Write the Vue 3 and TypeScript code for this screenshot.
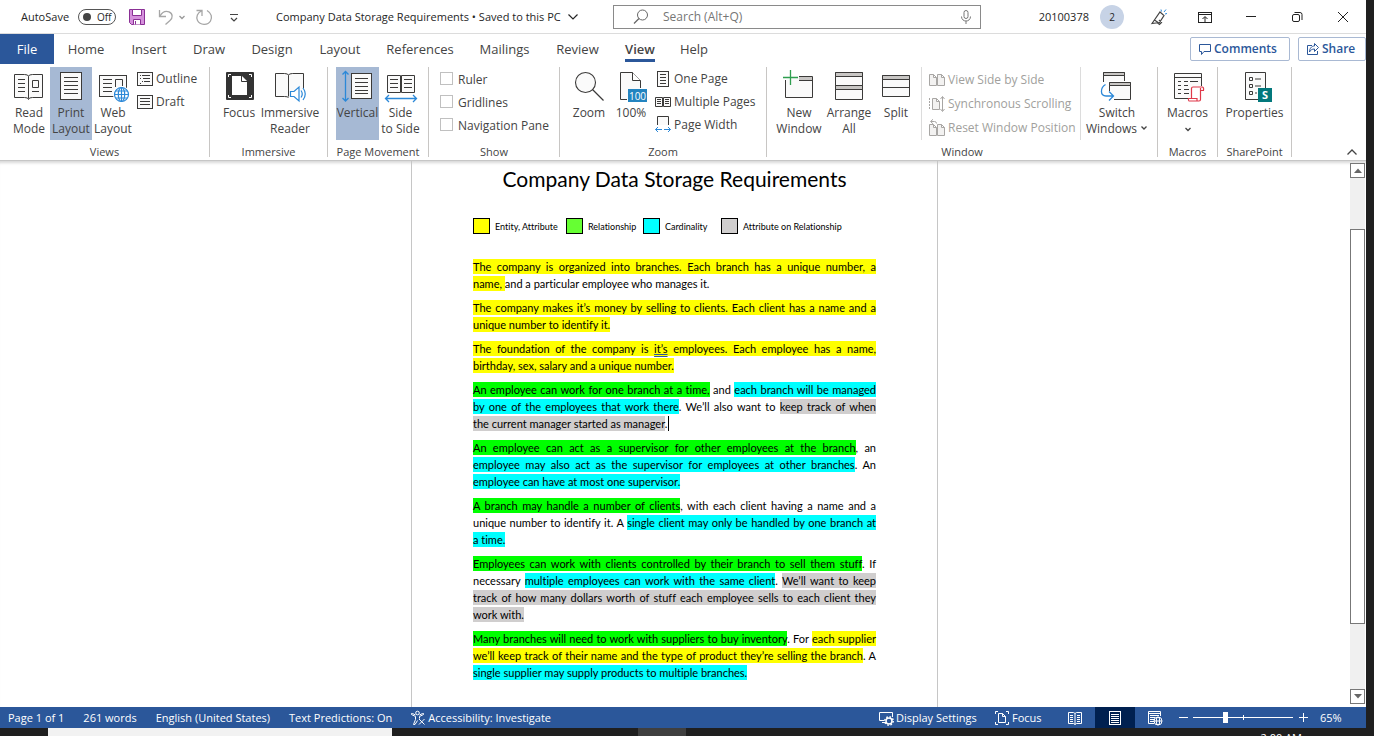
<script setup lang="ts">
import { h, ref } from 'vue'

const K = '#3b3a39'
const B = '#2b88d8'
const G = '#a8a6a4'

const lines = (x1: number, x2: number, ys: number[], color = K): string =>
  `<path d="${ys.map((y) => `M${x1} ${y}H${x2}`).join('')}" stroke="${color}" fill="none"/>`

const smallPages = `<path d="M.5 2.5h4l3 3v8h-7zM8.500 2.500h4l3 3v8h-7zM4.500 2.500v3h3M12.500 2.500v3h3" fill="#f3f2f1" stroke="${G}"/>`

const icons: Record<string, string> = {
  save: `<path d="M.5.5h15v15H2.500l-2-2z" fill="#d590dc" stroke="#8a2f95"/><path d="M3.500.5h9v6h-9zM4.500 15.500v-5h7v5" fill="#fff" stroke="#8a2f95"/><path d="M6.500 12v3.500" stroke="#8a2f95"/>`,
  undo: `<path d="M1.500 1v6.500H8M2 7C4 3.500 7.500 1.500 11 2.800c4 1.700 4 6.200 1 8.700L7.500 15.500" fill="none" stroke="#a6a6a6" stroke-width="1.300"/>`,
  redo: `<path d="M.5 1.500H6V7M5.500 2C1.500 3.500-.2 8 1.500 11.500c2.500 5 10.500 5 13 .5C16.500 8.500 15.500 4 11 1.500" fill="none" stroke="#a6a6a6" stroke-width="1.300"/>`,
  customize: `<path d="M4 5.500h8M5 9l3 3 3-3" fill="none" stroke="#444" stroke-width="1.200"/>`,
  chevron: `<path d="M3.500 5.500L8 10l4.500-4.500" fill="none" stroke="currentColor" stroke-width="1.200"/>`,
  chevronSmall: `<path d="M5.500 7L8 9.500 10.500 7" fill="none" stroke="currentColor" stroke-width="1.300"/>`,
  chevronUp: `<path d="M3.500 10.500L8 6l4.500 4.500" fill="none" stroke="currentColor" stroke-width="1.300"/>`,
  search: `<circle cx="9.500" cy="6" r="5" fill="none" stroke="#666"/><path d="M6 9.500L1 14.500" stroke="#666" stroke-width="1.200"/>`,
  mic: `<rect x="6" y="1.500" width="4" height="8" rx="2" fill="none" stroke="#777"/><path d="M3.500 7.500c0 6 9 6 9 0M8 12v3" fill="none" stroke="#777"/>`,
  pen: `<path d="M1 14.500L9 3l4 3.500-4.500 7zM3.500 11l5 3.500M6 13.500l2.500 2 2-2-2.500-2.500" fill="none" stroke="#444" stroke-width="1.200"/><path d="M10 .5l.5 2M13 3l2-2.500M14 5l2-.5" stroke="${B}"/>`,
  display: `<rect x="1.500" y="3.500" width="13" height="10" fill="none" stroke="#222"/><path d="M1.500 5.500h13M8 13V8M5.500 10L8 7.500l2.500 2.500" fill="none" stroke="#222"/>`,
  minimize: `<path d="M3 7.500h10" stroke="#222"/>`,
  restore: `<rect x="3.500" y="5.500" width="7" height="7" rx="1.500" fill="none" stroke="#222"/><path d="M5.500 3.500h5.500a2 2 0 0 1 2 2V11" fill="none" stroke="#222"/>`,
  close: `<path d="M3 3l10 10M13 3L3 13" stroke="#222"/>`,
  comment: `<path d="M2.500 3.500h11v7H7l-2.500 3v-3h-2z" fill="none" stroke="#2b579a"/>`,
  share: `<path d="M7 4.500H2.500v9h10V10" fill="none" stroke="#2b579a"/><path d="M9.500 2.500l4 4-4 4v-2.500C7 8 5.500 9 4.500 11c0-3.500 2-6 5-6z" fill="none" stroke="#2b579a"/>`,
  read: `<path d="M1.500 3.500h10q4 0 4 2 0-2 4-2h10v23h-10q-4 0-4 2 0-2-4-2h-10z" fill="#fafafa" stroke="${K}"/><path d="M15.500 5.500v22M19.500 9.500h6v7h-6zM19 20.500h7" fill="none" stroke="${K}"/>${lines(5, 12, [8.5, 12.5, 16.5, 20.5])}`,
  print: `<rect x="5.500" y="1.500" width="21" height="27" fill="#fafafa" stroke="${K}"/>${lines(9, 23, [6.5, 10.5, 14.5, 18.5, 22.5])}`,
  web: `<rect x="2.500" y="4.500" width="27" height="21" fill="#fafafa" stroke="${K}"/>${lines(6, 15, [8.5, 12.5, 16.5, 20.5])}<path d="M18.500 16V8.500h7V15" fill="none" stroke="${K}"/><circle cx="24.500" cy="23.500" r="8.500" fill="#fff"/><g fill="#fff" stroke="${B}" stroke-width="1.200"><circle cx="24.500" cy="23.500" r="7"/><ellipse cx="24.500" cy="23.500" rx="3.200" ry="7"/><path d="M17.500 23.500h14M18.500 20h12M18.500 27h12M24.500 16.500v14"/></g>`,
  outline: `<rect x=".5" y="1.500" width="15" height="13" fill="#fafafa" stroke="${K}"/><path d="M3 4.500h1M3 7.500h1M5 10.500h1M5 4.500h8M6 7.500h7M7 10.500h6M3 12.500h1" stroke="${K}"/>`,
  draft: `<rect x=".5" y="1.500" width="15" height="13" fill="#fafafa" stroke="${K}"/>${lines(3, 13, [4.5, 7.5, 10.5])}`,
  focus: `<rect x="3" y="1" width="28" height="28" rx="1" fill="#333"/><path d="M5.500 6V3.500H8M26 3.500h2.500V6M28.500 24v2.500H26M8 26.500H5.500V24" fill="none" stroke="#fff"/><path d="M9 5h10l5 5v14H9z" fill="#fff"/><path d="M18.500 5v5.500H24" fill="none" stroke="#333"/>`,
  immersive: `<path d="M14.500 26.500q-1-1-4-1h-9v-23h9q4 0 4 2 0-2 4-2h11v15" fill="#fafafa" stroke="${K}"/><path d="M14.500 4.500v21" stroke="${K}"/><path d="M16.500 20.500h3.500l5-4.500v14l-5-4.500h-3.500z" fill="#fff" stroke="${B}" stroke-width="1.200"/><path d="M27 19.500q2.500 3.500 0 7M29 17q4.500 6 0 12" fill="none" stroke="${B}" stroke-width="1.200"/>`,
  vertical: `<rect x="9.500" y="2.500" width="20" height="25" fill="#fafafa" stroke="${K}"/>${lines(13, 26, [7.5, 11.5, 15.5, 19.5, 22.5])}<path d="M3.500 0v30M.5 3.500L3.500.5l3 3M.5 27l3 3 3-3" fill="none" stroke="${B}" stroke-width="1.300"/>`,
  side: `<path d="M2.500 4.500h13v17h-13zM16.500 4.500h13v17h-13z" fill="#fafafa" stroke="${K}"/>${lines(5, 13, [8.5, 12.5, 16.5])}${lines(19, 27, [8.5, 12.5, 16.5])}<path d="M.5 27.500h31M4 24l-3.500 3.500L4 31M28 24l3.500 3.500L28 31" fill="none" stroke="${B}" stroke-width="1.300"/>`,
  zoom: `<circle cx="12.500" cy="11.500" r="10" fill="#fafafa" stroke="${K}" stroke-width="1.100"/><path d="M19.500 18.500l11 11" stroke="${K}" stroke-width="1.300"/>`,
  hundred: `<path d="M12 28.500H5.500v-27h12l8 8V17" fill="#fafafa" stroke="${K}"/><path d="M17.500 1.500v8h8" fill="#fff" stroke="${K}"/><rect x="13" y="18" width="19" height="13" fill="#2384c0"/><text x="22.500" y="28.500" font-size="10" font-family="Open Sans, sans-serif" fill="#fff" text-anchor="middle">100</text>`,
  onePage: `<rect x="2.500" y=".5" width="11" height="15" fill="#fafafa" stroke="${K}"/>${lines(5, 11, [3.5, 6.5, 9.5, 12.5])}`,
  multi: `<path d="M.5 3.500h7v9h-7zM8.500 3.500h7v9h-7z" fill="#fafafa" stroke="${K}"/>${lines(2, 6, [5.5, 7.5, 9.5])}${lines(10, 14, [5.5, 7.5, 9.5])}`,
  pageWidth: `<path d="M2.500 8V-.5h11V8" fill="#fafafa" stroke="${K}"/><path d="M.5 12.500H7M9 12.500h6.500M3 10L.5 12.500 3 15M13 10l2.500 2.500L13 15" fill="none" stroke="${B}"/>`,
  newWindow: `<path d="M2.500 9v17.500h27v-21H16" fill="#fafafa" stroke="${K}"/><path d="M16 6h13v3H16z" fill="#c8c6c4"/><path d="M16 9.500h13.500" stroke="${K}"/><path d="M7.500-1v15M0 6.500h15" stroke="#2f9e4f" stroke-width="1.300"/>`,
  arrange: `<path d="M2.500 1.500h27v27h-27z" fill="#fafafa" stroke="${K}"/><path d="M2.500 1.500h27v4h-27zM2.500 14.500h27v4h-27z" fill="#c8c6c4" stroke="${K}"/>`,
  split: `<path d="M2.500 4.500h27v21h-27z" fill="#fafafa" stroke="${K}"/><path d="M2.500 4.500h27v4h-27z" fill="#c8c6c4" stroke="${K}"/><path d="M3 16.500h26" stroke="${K}"/>`,
  sideBySide: smallPages,
  sync: `<path d="M.5 2v12" stroke="${G}" stroke-dasharray="2 1"/><path d="M3.500 2.500h4l3 3v8h-7zM7.500 2.500v3h3" fill="#f3f2f1" stroke="${G}"/><path d="M13.500.8v14M11.500 3l2-2.500 2 2.500M11.500 13l2 2.500 2-2.500" fill="none" stroke="${G}"/>`,
  reset: `<g transform="translate(0 2)">${smallPages}</g><path d="M2 1.500h3.500q2 0 2 2M4-.7L1.500 1.500 4 3.800" fill="none" stroke="${G}"/>`,
  switchWin: `<path d="M2.500 11V1.500h21V10" fill="#fafafa" stroke="${K}"/><path d="M2.500 1.500h21v3h-21z" fill="#c8c6c4" stroke="${K}"/><path d="M8.500 11.500h21v17h-21z" fill="#fafafa" stroke="#fff" stroke-width="3"/><path d="M8.500 20v-8.500h21v17H13" fill="#fafafa" stroke="${K}"/><path d="M8.500 11.500h21v3h-21z" fill="#c8c6c4" stroke="${K}"/><path d="M4.500 13.500C-1 17-1 25 5 25h7M8 20.500l4.500 4.500L8 29.500" fill="none" stroke="${B}" stroke-width="1.300"/>`,
  macros: `<path d="M16 27.500H2.500v-25h27V15" fill="#fafafa" stroke="${K}"/><path d="M2.500 6.500h27" stroke="${K}"/><path d="M6 10.500h3M6 14.500h3M6 18.500h3M6 22.500h3M12 10.500h4M18 10.500h8M12 14.500h4M12 18.500h5M12 22.500h5" stroke="${K}"/><path d="M19.500 27.500v-10q0-1.500 1.500-1.500h9.500q1.500.5 1 3.500h-3v9q0 1.500-1.500 1.500h-10q-1-.5-.5-2.500h8.500v2.500M28.500 19.500V17" fill="#fff" stroke="#e0394a" stroke-width="1.200"/>`,
  properties: `<path d="M19 28.500H6.500v-27h20V17" fill="#fafafa" stroke="${K}"/><path d="M10.500 6.500h3v3h-3zM10.500 13.500h3v3h-3zM10.500 20.500h3v3h-3zM16 8h6M16 15h6M16 22h2" fill="none" stroke="${K}"/><rect x="19" y="17" width="14" height="14" fill="#03787c"/><text x="26" y="28" font-size="11" font-weight="bold" font-family="Open Sans, sans-serif" fill="#fff" text-anchor="middle">S</text>`,
  access: `<g fill="none" stroke="#fff"><circle cx="6.500" cy="3" r="1.800"/><path d="M.5 4.500l4 2v3l-2 5H4l2.500-4M12.500 4.500l-4 2v2M.5 4.500q-.5-1.500 1-1l3 1.500M12.500 4.500q.5-1.500-1-1l-3 1.500M8 9l5.500 5.500M13.500 9L8 14.500"/></g>`,
  settings: `<path d="M7 12.500H3M5.500 10.500H.5v-8h13V7" fill="none" stroke="#fff"/><circle cx="10" cy="11" r="3" fill="none" stroke="#fff" stroke-width="1.500"/><circle cx="10" cy="11" r="4.200" fill="none" stroke="#fff" stroke-width="1.500" stroke-dasharray="1.600 1.700"/>`,
  focusSmall: `<path d="M3 1.500H.5V4M11 1.500h2.500V4M13.500 12v2.500H11M3 14.500H.5V12M3.500 3.500h4l3 3v6h-7zM7.500 3.500v3h3" fill="none" stroke="#fff"/>`,
  readSmall: `<path d="M1.500 2.500h5l1.500 1 1.500-1h5v11h-5l-1.500 1-1.500-1h-5zM8 3.500v11M3 5.500h3M3 7.500h3M3 9.500h3M3 11.500h3M10 5.500h3M10 7.500h3M10 9.500h3M10 11.500h3" fill="none" stroke="#fff"/>`,
  printSmall: `<rect x="2.500" y="1.500" width="11" height="13" fill="none" stroke="#fff"/>${lines(4, 12, [4.5, 6.5, 8.5, 10.5, 12.5], '#fff')}`,
  webSmall: `<path d="M7 13.500H1.500v-12h12V6M1.500 3.500h12M3 5.500h9M3 7.500h5M3 9.500h4M3 11.500h4" fill="none" stroke="#fff"/><g fill="none" stroke="#fff"><circle cx="11" cy="11" r="4"/><ellipse cx="11" cy="11" rx="1.700" ry="4"/><path d="M7 11h8"/></g>`,
  minus: `<path d="M4 7.500h9" stroke="#fff"/>`,
  plus: `<path d="M4 7.500h9M8.500 3v9" stroke="#fff"/>`,
}

const Icon = (props: { name: string; size?: number }) =>
  h('svg', {
    class: 'icon',
    width: props.size ?? 16,
    height: props.size ?? 16,
    viewBox: `0 0 ${props.size ?? 16} ${props.size ?? 16}`,
    'aria-hidden': 'true',
    innerHTML: icons[props.name],
  })
Icon.props = ['name', 'size']

const tabs = ['Home', 'Insert', 'Draw', 'Design', 'Layout', 'References', 'Mailings', 'Review', 'View', 'Help']
const activeTab = ref('View')
const showOptions = ['Ruler', 'Gridlines', 'Navigation Pane']
const zoomLevel = ref(32)
const query = ref('')

type Mark = '' | 'yellow' | 'green' | 'cyan' | 'gray'
type Run = [text: string, mark?: Mark, underline?: boolean]

const legend: [string, string][] = [
  ['Entity, Attribute', 'yellow'],
  ['Relationship', 'lime'],
  ['Cardinality', 'cyan'],
  ['Attribute on Relationship', 'gray'],
]

const paragraphs: Run[][][] = [
  [
    [['The company is organized into branches. Each branch has a unique number, a', 'yellow']],
    [['name, ', 'yellow'], ['and a particular employee who manages it.']],
  ],
  [
    [['The company makes it’s money by selling to clients. Each client has a name and a', 'yellow']],
    [['unique number to identify it.', 'yellow']],
  ],
  [
    [['The foundation of the company is ', 'yellow'], ['it’s', 'yellow', true], [' employees. Each employee has a name,', 'yellow']],
    [['birthday, sex, salary and a unique number.', 'yellow']],
  ],
  [
    [['An employee can work for one branch at a time,', 'green'], [' and '], ['each branch will be managed', 'cyan']],
    [['by one of the employees that work there', 'cyan'], ['. We’ll also want to '], ['keep track of when', 'gray']],
    [['the current manager started as manager', 'gray'], ['.']],
  ],
  [
    [['An employee can act as a supervisor for other employees at the branch', 'green'], [', an']],
    [['employee may also act as the supervisor for employees at other branches', 'cyan'], ['. An']],
    [['employee can have at most one supervisor.', 'cyan']],
  ],
  [
    [['A branch may handle a number of clients', 'green'], [', with each client having a name and a']],
    [['unique number to identify it. A '], ['single client may only be handled by one branch at', 'cyan']],
    [['a time.', 'cyan']],
  ],
  [
    [['Employees can work with clients controlled by their branch to sell them stuff', 'green'], ['. If']],
    [['necessary '], ['multiple employees can work with the same client', 'cyan'], ['. '], ['We’ll want to keep', 'gray']],
    [['track of how many dollars worth of stuff each employee sells to each client they', 'gray']],
    [['work with.', 'gray']],
  ],
  [
    [['Many branches will need to work with suppliers to buy inventory', 'green'], ['. For '], ['each supplier', 'yellow']],
    [['we’ll keep track of their name and the type of product they’re selling the branch', 'yellow'], ['. A']],
    [['single supplier may supply products to multiple branches.', 'cyan']],
  ],
]
const caretParagraph = 3
</script>

<template>
  <div class="desktop">
    <div class="word">
      <header class="titlebar">
        <div class="quick">
          <span class="autosave">AutoSave</span>
          <button class="toggle" type="button" aria-label="AutoSave"><span class="knob"></span>Off</button>
          <button class="q-save" type="button" aria-label="Save"><Icon name="save" /></button>
          <button class="q-undo" type="button" aria-label="Undo"><Icon name="undo" /></button>
          <button class="q-drop" type="button" aria-label="Undo history"><Icon name="chevronSmall" /></button>
          <button class="q-redo" type="button" aria-label="Redo"><Icon name="redo" /></button>
          <button class="q-more" type="button" aria-label="Customize toolbar"><Icon name="customize" /></button>
          <button class="doc-name" type="button">Company Data Storage Requirements • Saved to this PC<Icon name="chevron" /></button>
        </div>
        <label class="search">
          <Icon name="search" />
          <input v-model="query" type="text" placeholder="Search (Alt+Q)" aria-label="Search" />
          <Icon name="mic" />
        </label>
        <div class="window-tools">
          <span class="user">20100378</span>
          <span class="avatar">2</span>
          <button type="button" aria-label="Coming soon"><Icon name="pen" /></button>
          <button type="button" aria-label="Ribbon display options"><Icon name="display" /></button>
          <button type="button" aria-label="Minimize"><Icon name="minimize" /></button>
          <button type="button" aria-label="Restore"><Icon name="restore" /></button>
          <button type="button" aria-label="Close"><Icon name="close" /></button>
        </div>
      </header>

      <nav class="tabs">
        <button class="file" type="button">File</button>
        <div class="tab-list">
          <button
            v-for="tab in tabs"
            :key="tab"
            type="button"
            :class="{ active: tab === activeTab }"
            @click="activeTab = tab"
          ><span>{{ tab }}</span></button>
        </div>
        <div class="tab-actions">
          <button type="button"><Icon name="comment" />Comments</button>
          <button type="button" class="share"><Icon name="share" />Share</button>
        </div>
      </nav>

      <section class="ribbon">
        <div class="group views">
          <div class="tools">
            <button class="big" type="button"><Icon name="read" :size="32" /><span>Read<br />Mode</span></button>
            <button class="big on" type="button"><Icon name="print" :size="32" /><span>Print<br />Layout</span></button>
            <button class="big" type="button"><Icon name="web" :size="32" /><span>Web<br />Layout</span></button>
            <div class="rows">
              <button type="button"><Icon name="outline" />Outline</button>
              <button type="button"><Icon name="draft" />Draft</button>
            </div>
          </div>
          <h2>Views</h2>
        </div>
        <div class="group immersive">
          <div class="tools">
            <button class="big" type="button"><Icon name="focus" :size="32" /><span>Focus</span></button>
            <button class="big wide" type="button"><Icon name="immersive" :size="32" /><span>Immersive<br />Reader</span></button>
          </div>
          <h2>Immersive</h2>
        </div>
        <div class="group movement">
          <div class="tools">
            <button class="big on" type="button"><Icon name="vertical" :size="32" /><span>Vertical</span></button>
            <button class="big" type="button"><Icon name="side" :size="32" /><span>Side<br />to Side</span></button>
          </div>
          <h2>Page Movement</h2>
        </div>
        <div class="group show">
          <div class="tools">
            <div class="rows">
              <label v-for="option in showOptions" :key="option"><input type="checkbox" />{{ option }}</label>
            </div>
          </div>
          <h2>Show</h2>
        </div>
        <div class="group zoom">
          <div class="tools">
            <button class="big" type="button"><Icon name="zoom" :size="32" /><span>Zoom</span></button>
            <button class="big" type="button"><Icon name="hundred" :size="32" /><span>100%</span></button>
            <div class="rows">
              <button type="button"><Icon name="onePage" />One Page</button>
              <button type="button"><Icon name="multi" />Multiple Pages</button>
              <button type="button"><Icon name="pageWidth" />Page Width</button>
            </div>
          </div>
          <h2>Zoom</h2>
        </div>
        <div class="group windows">
          <div class="tools">
            <button class="big" type="button"><Icon name="newWindow" :size="32" /><span>New<br />Window</span></button>
            <button class="big" type="button"><Icon name="arrange" :size="32" /><span>Arrange<br />All</span></button>
            <button class="big" type="button"><Icon name="split" :size="32" /><span>Split</span></button>
            <div class="rows boxed">
              <button type="button" disabled><Icon name="sideBySide" />View Side by Side</button>
              <button type="button" disabled><Icon name="sync" />Synchronous Scrolling</button>
              <button type="button" disabled><Icon name="reset" />Reset Window Position</button>
            </div>
            <button class="big switch" type="button"><Icon name="switchWin" :size="32" /><span>Switch<br />Windows<svg class="caret" width="8" height="6" viewBox="0 0 8 6" aria-hidden="true"><path d="M1.500 1.500L4 4l2.500-2.500" fill="none" stroke="#444" stroke-width="1.300" /></svg></span></button>
          </div>
          <h2>Window</h2>
        </div>
        <div class="group macros">
          <div class="tools">
            <button class="big" type="button"><Icon name="macros" :size="32" /><span>Macros<br /><Icon name="chevronSmall" /></span></button>
          </div>
          <h2>Macros</h2>
        </div>
        <div class="group sharepoint">
          <div class="tools">
            <button class="big" type="button"><Icon name="properties" :size="32" /><span>Properties</span></button>
          </div>
          <h2>SharePoint</h2>
        </div>
        <button class="collapse" type="button" aria-label="Collapse the ribbon"><Icon name="chevronUp" /></button>
      </section>

      <main class="canvas">
        <div class="desk">
          <article class="page">
            <h1>Company Data Storage Requirements</h1>
            <ul class="legend">
              <li v-for="[label, color] in legend" :key="label"><i :class="color"></i><span>{{ label }}</span></li>
            </ul>
            <p v-for="(para, p) in paragraphs" :key="p">
              <span v-for="(line, l) in para" :key="l" class="line"><span
                v-for="(run, r) in line" :key="r" :class="[run[1] || 'plain', { mistake: run[2] }]">{{ run[0] }}</span><span
                v-if="p === caretParagraph && l === para.length - 1" class="cursor"></span></span>
            </p>
          </article>
        </div>
        <div class="scrollbar">
          <button type="button" aria-label="Scroll up"><svg width="8" height="5" viewBox="0 0 8 5"><path d="M0 5l4-4.500L8 5z" fill="#666" /></svg></button>
          <div class="track"><div class="thumb"></div></div>
          <button type="button" aria-label="Scroll down"><svg width="8" height="5" viewBox="0 0 8 5"><path d="M0 0l4 4.500L8 0z" fill="#666" /></svg></button>
        </div>
      </main>

      <footer class="status">
        <div class="facts">
          <span>Page 1 of 1</span>
          <span>261 words</span>
          <span>English (United States)</span>
          <span>Text Predictions: On</span>
          <button type="button"><Icon name="access" />Accessibility: Investigate</button>
        </div>
        <div class="modes">
          <button class="settings" type="button"><Icon name="settings" />Display Settings</button>
          <button class="focus" type="button"><Icon name="focusSmall" />Focus</button>
          <button class="mode" type="button" aria-label="Read Mode"><Icon name="readSmall" /></button>
          <button class="mode on" type="button" aria-label="Print Layout"><Icon name="printSmall" /></button>
          <button class="mode" type="button" aria-label="Web Layout"><Icon name="webSmall" /></button>
          <button class="step" type="button" aria-label="Zoom out"><Icon name="minus" /></button>
          <input v-model="zoomLevel" type="range" min="0" max="100" aria-label="Zoom" />
          <button class="step" type="button" aria-label="Zoom in"><Icon name="plus" /></button>
          <span class="percent">65%</span>
        </div>
      </footer>
    </div>

    <div class="taskbar">
      <div class="task-search"></div>
      <div class="task-app"></div>
      <time class="clock">2:00 AM</time>
    </div>
  </div>
</template>

<style>
body {
  background: #1f1f1f;
}
</style>

<style scoped>
.desktop {
  display: grid;
  grid-template-rows: 1fr 8px;
  height: 100vh;
  overflow: hidden;
  background: #1f1f1f;
  color: #444;
  font: 12px/16px 'Open Sans', 'Noto Sans', sans-serif;
}
.desktop * {
  box-sizing: border-box;
}
button {
  display: flex;
  align-items: center;
  margin: 0;
  padding: 0;
  border: 0;
  background: none;
  color: inherit;
  font: inherit;
}
.icon {
  flex: none;
  overflow: visible;
}
.word {
  display: grid;
  grid-template-rows: 34px 33px 94px 1fr 21px;
  min-height: 0;
  margin-right: 8px;
  background: #fff;
}

/* title bar */
.titlebar {
  display: grid;
  grid-template-columns: 613fr 368fr 385fr;
  align-items: center;
  border-bottom: 1px solid #dcdcdc;
  color: #262626;
}
.quick {
  display: flex;
  align-items: center;
  padding-left: 21px;
  white-space: nowrap;
}
.autosave {
  width: 57px;
}
.toggle {
  width: 38px;
  height: 16px;
  gap: 6px;
  padding-left: 4px;
  border: 1px solid #555;
  border-radius: 8px;
  font-size: 10px;
}
.knob {
  width: 8px;
  height: 8px;
  border-radius: 50%;
  background: #444;
}
.q-save {
  margin-left: 13px;
}
.q-undo {
  margin-left: 13px;
}
.q-drop {
  color: #999;
}
.q-redo {
  margin-left: 6px;
}
.q-more {
  margin-left: 14px;
}
.autosave,
.doc-name,
.user {
  font-size: 11px;
}
.doc-name {
  gap: 4px;
  margin-left: 34px;
}
.search {
  display: flex;
  align-items: center;
  height: 24px;
  padding: 0 6px 0 19px;
  border: 1px solid #8a8a8a;
}
.search input {
  flex: 1;
  min-width: 0;
  padding: 0 0 0 14px;
  border: 0;
  outline: 0;
  background: none;
  font: inherit;
}
.search input::placeholder {
  color: #767676;
  opacity: 1;
}
.window-tools {
  display: flex;
  align-items: center;
  justify-content: flex-end;
}
.window-tools button {
  justify-content: center;
  width: 46px;
}
.avatar {
  width: 24px;
  height: 24px;
  margin: 0 12px 0 11px;
  border-radius: 50%;
  background: #c7d3e6;
  font-size: 10px;
  line-height: 24px;
  text-align: center;
}

/* tabs */
.tabs {
  display: flex;
  font-size: 13px;
}
.file {
  justify-content: center;
  width: 54px;
  height: 30px;
  background: #2b579a;
  color: #fff;
}
.tab-list {
  display: grid;
  grid-template-columns: 64px 62px 58px 68px 68px 92px 77px 69px 56px 52px;
  height: 30px;
}
.tab-list button {
  justify-content: center;
}
.tab-list .active {
  font-weight: 600;
}
.tab-list .active span {
  padding: 5px 0 2px;
  border-bottom: 3px solid #2b579a;
}
.tab-actions {
  display: flex;
  gap: 8px;
  margin-left: auto;
  padding-top: 3px;
  color: #2b579a;
  font-weight: 600;
}
.tab-actions button {
  height: 24px;
  gap: 1px;
  width: 100px;
  padding-left: 6px;
  border: 1px solid #a9b9d3;
  border-radius: 2px;
  font-size: 12px;
}
.tab-actions .share {
  width: 68px;
}

/* ribbon */
.ribbon {
  display: flex;
  border-bottom: 1px solid #c6c6c6;
}
.group {
  display: flex;
  flex: none;
  flex-direction: column;
  height: 90px;
  border-right: 1px solid #c8c6c4;
}
.group h2 {
  margin: auto 0 -3px;
  font-size: 11px;
  font-weight: 400;
  line-height: 16px;
  text-align: center;
  white-space: nowrap;
}
.tools {
  display: flex;
  height: 73px;
}
.big {
  flex: none;
  flex-direction: column;
  width: 42px;
  height: 73px;
  padding-top: 4px;
  white-space: nowrap;
}
.big span {
  padding-top: 2px;
}
.big span .icon {
  display: block;
  margin: auto;
}
.big.on {
  background: #a6b9d4;
}
.rows {
  display: grid;
  grid-auto-rows: 23px;
  white-space: nowrap;
}
.rows button {
  gap: 3px;
}
.views {
  width: 210px;
}
.views .tools {
  padding-left: 8px;
}
.views .rows {
  padding-left: 3px;
}
.immersive {
  width: 118px;
}
.immersive .tools {
  padding-left: 8px;
}
.immersive .wide {
  width: 60px;
}
.movement {
  width: 101px;
}
.movement .tools {
  padding-left: 8px;
}
.movement .big {
  width: 43px;
}
.show {
  width: 131px;
}
.show .rows {
  padding: 1px 0 0 11px;
}
.show label {
  display: flex;
  align-items: center;
  gap: 5px;
}
.show input {
  width: 13px;
  height: 13px;
  margin: 0 0 2px;
  border: 1px solid #c0c0c0;
  appearance: none;
  background: #fff;
}
.zoom {
  width: 207px;
}
.zoom .tools {
  padding-left: 8px;
}
.zoom .rows {
  padding-left: 3px;
}
.windows {
  width: 391px;
}
.windows .tools {
  gap: 8px;
  padding-left: 11px;
}
.windows .big:nth-child(3) {
  margin-left: -3px;
}
.windows .boxed {
  grid-auto-rows: 24px;
  width: 160px;
  padding: 1px 0 0 7px;
  margin-left: -4px;
  border: solid #dcdcdc;
  border-width: 0 1px;
  color: #a19f9d;
}
.windows .boxed button {
  gap: 3px;
}
.windows .switch {
  width: 64px;
  margin-left: -4px;
}
.caret {
  margin-left: 3px;
  vertical-align: 2px;
}
.macros {
  width: 60px;
}
.macros .big,
.sharepoint .big {
  width: 100%;
}
.sharepoint {
  width: 74px;
}
.collapse {
  align-self: flex-end;
  margin: 0 6px 0 auto;
}

/* document */
.canvas {
  display: flex;
  min-height: 0;
  box-shadow: inset 0 4px 3px -2px #d8d8d8;
}
.desk {
  display: flex;
  justify-content: center;
  flex: 1;
  padding-right: 1px;
  overflow: hidden;
}
.page {
  width: 527px;
  padding: 0 61px;
  border: solid #c6c6c6;
  border-width: 0 1px;
  color: #000;
  font: 11px/17px Lato, 'Open Sans', sans-serif;
  font-variant-ligatures: none;
}
.page h1 {
  margin: 3px 0 0;
  font-size: 21px;
  font-weight: 400;
  line-height: 30px;
  text-align: center;
  white-space: nowrap;
}
.legend {
  display: grid;
  grid-template-columns: 93px 77px 78px auto;
  margin: 23px 0 24px;
  padding: 0;
  font-size: 9px;
  list-style: none;
  white-space: nowrap;
}
.legend li {
  display: flex;
  align-items: center;
  gap: 5px;
}
.legend span {
  padding-top: 2px;
  line-height: 15px;
}
.legend i {
  width: 17px;
  height: 16px;
  border: 1px solid #000;
}
.page p {
  margin: 0 0 7px;
}
.line {
  display: block;
  white-space: nowrap;
  text-align: justify;
}
.line:not(:last-child) {
  white-space: normal;
  text-align-last: justify;
}
.line span {
  padding: 1px 0;
}
.yellow {
  background: #ff0;
}
.green {
  background: #0f0;
}
.lime {
  background: #66ff33;
}
.cyan {
  background: #0ff;
}
.gray {
  background: #d0cece;
}
.mistake {
  text-decoration: underline double #2b579a;
}
.line .cursor {
  margin-left: 1px;
  border-left: 1px solid #000;
}
.scrollbar {
  display: flex;
  flex-direction: column;
  width: 15px;
  margin: 2px 1px 3px 0;
}
.scrollbar button {
  justify-content: center;
  height: 15px;
  border: 1px solid #777;
  background: #fff;
}
.track {
  display: flex;
  flex: 1;
  padding: 51px 0 65px;
  background: #f0f0f0;
}
.thumb {
  flex: 1;
  border: 1px solid #777;
  background: #fff;
}

/* status bar */
.status {
  display: flex;
  justify-content: space-between;
  background: #2b579a;
  color: #fff;
  font-size: 11px;
  white-space: nowrap;
}
.facts,
.modes {
  display: flex;
  align-items: center;
}
.facts {
  gap: 19px;
  padding-left: 8px;
}
.facts button,
.modes button {
  gap: 1px;
}
.settings {
  width: 116px;
}
.focus {
  width: 60px;
}
.mode {
  justify-content: center;
  width: 40px;
  height: 21px;
}
.mode.on {
  background: #002050;
}
.step {
  width: 16px;
}
.modes input {
  width: 104px;
  height: 11px;
  margin: 0;
  appearance: none;
  background:
    linear-gradient(#fff, #fff) 52px 3px / 1px 5px no-repeat,
    linear-gradient(#fff, #fff) 2px 5px / 100px 1px no-repeat;
}
.modes input::-webkit-slider-thumb {
  width: 5px;
  height: 11px;
  appearance: none;
  background: #fff;
}
.percent {
  width: 55px;
  padding-left: 9px;
}

/* desktop taskbar */
.taskbar {
  display: flex;
  overflow: hidden;
}
.task-search {
  width: 344px;
  margin-left: 48px;
  background: #f2f2f2;
}
.task-app {
  width: 48px;
  margin-left: 246px;
  background: #3f3f3f;
}
.clock {
  margin: 2px 72px 0 auto;
  color: #fff;
  font-size: 11px;
}
</style>
